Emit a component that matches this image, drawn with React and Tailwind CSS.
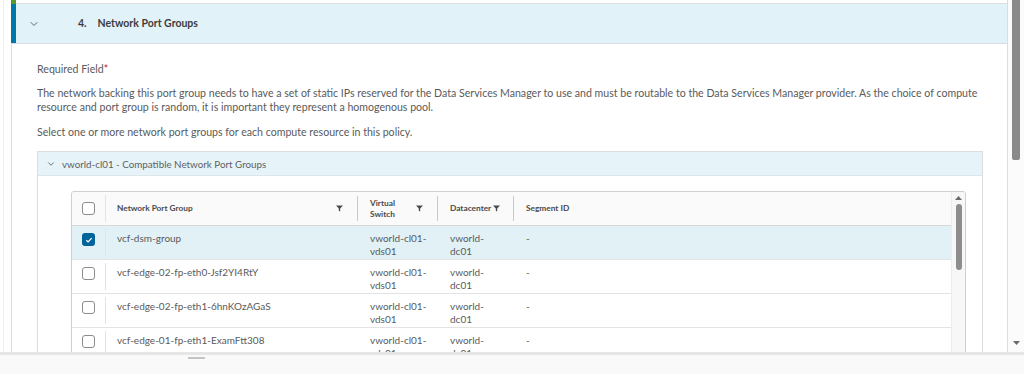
import { ChevronDown } from 'lucide-react';

const rows = [
  { name: 'vcf-dsm-group', selected: true },
  { name: 'vcf-edge-02-fp-eth0-Jsf2YI4RtY' },
  { name: 'vcf-edge-02-fp-eth1-6hnKOzAGaS' },
  { name: 'vcf-edge-01-fp-eth1-ExamFtt308' },
];

function Filter() {
  return (
    <svg width="7" height="7" viewBox="0 0 7 7" className="shrink-0">
      <path d="M0 0.5h7L4.2 3.6V6.5L2.8 5.8V3.6z" fill="#4a4a4a" />
    </svg>
  );
}

function Checkbox({ checked }) {
  if (checked) {
    return (
      <div className="w-[13px] h-[13px] rounded-[3px] bg-[#00639a] flex items-center justify-center">
        <svg width="8" height="8" viewBox="0 0 8 8">
          <path d="M1.3 4.2 3.1 5.9 6.7 2.1" fill="none" stroke="white" strokeWidth="1.3" />
        </svg>
      </div>
    );
  }
  return <div className="w-[13px] h-[13px] rounded-[3px] border border-[#8c8c8c] bg-white" />;
}

function Row({ name, selected }) {
  return (
    <div className={`flex h-[34px] border-b border-[#e3e3e3] text-[10px] leading-[13px] text-[#5a5a5a] ${selected ? 'bg-[#e1f1f6]' : 'bg-white'}`}>
      <div className="w-[34px] flex justify-center pt-[4px] border-r border-[#e3e3e3] my-[3px]">
        <Checkbox checked={selected} />
      </div>
      <div className="w-[252px] pl-[11px] pt-[6px]">{name}</div>
      <div className="w-[80px] pl-[12px] pt-[6px]">vworld-cl01-<br />vds01</div>
      <div className="w-[76px] pl-[12px] pt-[6px]">vworld-<br />dc01</div>
      <div className="flex-1 pl-[12px] pt-[6px]">-</div>
    </div>
  );
}

export default function App() {
  return (
    <div className="w-[1024px] h-[374px] overflow-hidden bg-white flex flex-col" style={{ fontFamily: 'Lato, "Open Sans", sans-serif' }}>
      <div className="h-[352px] flex shrink-0">
        {/* gutter */}
        <div className="w-[11px] bg-white flex">
          <div className="ml-[3px] w-px bg-[#eeeeee]" />
        </div>

        {/* card */}
        <div className="flex-1 flex flex-col border-r border-[#dddddd]">
          <div className="h-[4px] flex">
            <div className="w-[5px] bg-[#5a9a2a]" />
            <div className="flex-1 border-b border-[#dddddd]" />
          </div>
          <div className="h-[40px] flex border-b border-[#d6dde0]">
            <div className="w-[5px] bg-[#0077a8]" />
            <div className="flex-1 bg-[#e1f2f8] flex items-center">
              <ChevronDown className="ml-[12px] w-[12px] h-[12px] text-[#666]" strokeWidth={2} />
              <span className="ml-[38px] text-[10.5px] font-bold text-[#3d3d3d]">4.</span>
              <span className="ml-[11px] text-[10.5px] font-bold text-[#3d3d3d]">Network Port Groups</span>
            </div>
          </div>

          <div className="flex-1 border-l border-[#dddddd] pl-[25px] pr-[24px] pt-[18px] text-[10.6px] leading-[14px] text-[#5a5a5a] overflow-hidden">
            <p>Required Field<span className="text-[#c92100]">*</span></p>
            <p className="mt-[10px]">
              The network backing this port group needs to have a set of static IPs reserved for the Data Services Manager to use and must be routable to the Data Services Manager provider. As the choice of compute resource and port group is random, it is important they represent a homogenous pool.
            </p>
            <p className="mt-[11px]">Select one or more network port groups for each compute resource in this policy.</p>

            {/* inner accordion */}
            <div className="mt-[12px] border border-[#dddddd] border-b-0">
              <div className="h-[24px] bg-[#e6f4fa] border-b border-[#dde6ea] flex items-center">
                <ChevronDown className="ml-[8px] w-[10px] h-[10px] text-[#555]" strokeWidth={2} />
                <span className="ml-[6px] text-[9.8px] text-[#606060]">vworld-cl01 - Compatible Network Port Groups</span>
              </div>
              <div className="pl-[33px] pr-[16px] pt-[15px]">
                <div className="border border-[#cfcfcf] rounded-t-[3px] flex h-[200px] overflow-hidden">
                  <div className="flex-1 flex flex-col">
                    {/* header */}
                    <div className="h-[34px] flex bg-[#fafafa] border-b border-[#d8d8d8] text-[8.3px] font-bold text-[#4a4a4a] leading-[11px] shrink-0">
                      <div className="w-[34px] flex items-center justify-center border-r border-[#e3e3e3] my-[3px]">
                        <Checkbox />
                      </div>
                      <div className="w-[252px] pl-[11px] pr-[14px] flex items-center justify-between border-r border-[#c8c8c8] my-[4px]">
                        <span>Network Port Group</span>
                        <Filter />
                      </div>
                      <div className="w-[80px] pl-[12px] pr-[14px] flex items-center justify-between border-r border-[#c8c8c8] my-[4px]">
                        <span>Virtual<br />Switch</span>
                        <Filter />
                      </div>
                      <div className="w-[76px] pl-[12px] pr-[13px] flex items-center justify-between border-r border-[#c8c8c8] my-[4px]">
                        <span>Datacenter</span>
                        <Filter />
                      </div>
                      <div className="flex-1 pl-[12px] flex items-center">
                        <span>Segment ID</span>
                      </div>
                    </div>
                    {rows.map((r) => (
                      <Row key={r.name} {...r} />
                    ))}
                  </div>
                  {/* grid scrollbar */}
                  <div className="w-[14px] bg-[#f7f7f7] border-l border-[#ececec] flex flex-col items-center pt-[4px]">
                    <svg width="7" height="4" viewBox="0 0 7 4">
                      <path d="M0 4 3.5 0 7 4z" fill="#6a6a6a" />
                    </svg>
                    <div className="mt-[4px] w-[6px] h-[66px] rounded-full bg-[#8d8d8d]" />
                  </div>
                </div>
              </div>
            </div>
          </div>
        </div>

        {/* page scrollbar */}
        <div className="w-[16px] bg-[#fbfbfb] flex flex-col items-center">
          <div className="w-[8px] h-[160px] bg-[#8a8a8a] rounded-b-[2px]" />
          <div className="flex-1" />
          <svg width="7" height="4" viewBox="0 0 7 4" className="mb-[7px]">
            <path d="M0 0h7L3.5 4z" fill="#6a6a6a" />
          </svg>
        </div>
      </div>

      {/* bottom band */}
      <div className="flex-1 bg-[#f9f9f9] border-t-[3px] border-[#e6e6e6] relative">
        <div className="absolute left-[188px] top-[2px] w-[17px] h-[2px] bg-[#c4c4c4]" />
      </div>
    </div>
  );
}
